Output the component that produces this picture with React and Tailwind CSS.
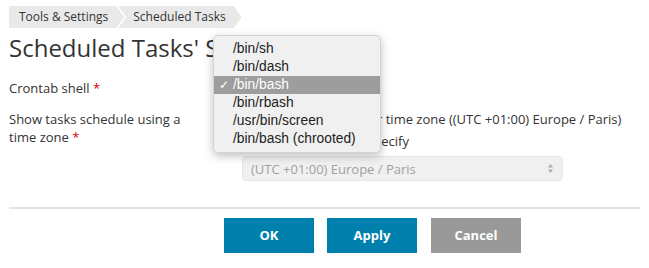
import React from "react";

const shells = [
  "/bin/sh",
  "/bin/dash",
  "/bin/bash",
  "/bin/rbash",
  "/usr/bin/screen",
  "/bin/bash (chrooted)",
];

const Crumb = ({ children, first }) => (
  <div
    className={`h-[22px] flex items-center bg-[#e9e9e9] text-[12px] text-[#333] ${
      first ? "pl-[10px] pr-[16px]" : "pl-[15px] pr-[16px] -ml-[6px]"
    }`}
    style={{
      clipPath: first
        ? "polygon(0 0, calc(100% - 8px) 0, 100% 50%, calc(100% - 8px) 100%, 0 100%)"
        : "polygon(0 0, calc(100% - 8px) 0, 100% 50%, calc(100% - 8px) 100%, 0 100%, 8px 50%)",
    }}
  >
    {children}
  </div>
);

const Radio = ({ checked }) => (
  <span className="w-[13px] h-[13px] rounded-full border border-[#aaa] bg-white flex items-center justify-center shrink-0">
    {checked && <span className="w-[5px] h-[5px] rounded-full bg-[#333]" />}
  </span>
);

export default function App() {
  return (
    <div className="relative w-[649px] h-[268px] bg-white font-['Open_Sans',sans-serif] text-[#333] overflow-hidden">
      <div className="px-[9px] pt-[6px]">
        <nav className="flex">
          <Crumb first>Tools &amp; Settings</Crumb>
          <Crumb>Scheduled Tasks</Crumb>
        </nav>
        <h1 className="mt-[3px] text-[24px] leading-[34px] text-[#333]">Scheduled Tasks' Settings</h1>

        <div className="mt-[9px] grid grid-cols-[233px_1fr] text-[13px] leading-[18px]">
          <div className="py-[5px]">
            Crontab shell <span className="text-[#d00]">*</span>
          </div>
          <div className="py-[2px]">
            <div className="w-[120px] h-[24px] border border-[#ccc] rounded-[3px] px-[8px] flex items-center">/bin/bash</div>
          </div>

          <div className="mt-[8px] w-[190px]">
            Show tasks schedule using a time zone <span className="text-[#d00]">*</span>
          </div>
          <div className="mt-[8px] flex flex-col">
            <label className="flex items-center gap-[5px]">
              <Radio checked />
              <span>Use the Plesk server time zone ((UTC +01:00) Europe / Paris)</span>
            </label>
            <label className="mt-[4px] flex items-center gap-[5px]">
              <Radio />
              <span>Use a time zone I specify</span>
            </label>
            <div className="mt-[6px] w-[321px] h-[25px] rounded-[4px] bg-[#f0f0f0] border border-[#e6e6e6] flex items-center justify-between pl-[8px] pr-[8px] text-[#a0a0a0]">
              <span>(UTC +01:00) Europe / Paris</span>
              <svg width="7" height="11" viewBox="0 0 7 11" className="text-[#aaa]">
                <path d="M3.5 1 L6 4.5 H1 Z M3.5 10 L6 6.5 H1 Z" fill="currentColor" />
              </svg>
            </div>
          </div>
        </div>

        <div className="mt-[26px] h-[2px] bg-[#e3e3e3]" />

        <div className="mt-[9px] pl-[215px] flex gap-[13px]">
          <button className="w-[90px] h-[35px] bg-[#0080ad] text-white text-[13px] font-bold">OK</button>
          <button className="w-[90px] h-[35px] bg-[#0080ad] text-white text-[13px] font-bold">Apply</button>
          <button className="ml-[1px] w-[90px] h-[35px] bg-[#999] text-white text-[13px] font-bold">Cancel</button>
        </div>
      </div>

      <div className="absolute left-[213px] top-[35px] w-[168px] py-[4px] rounded-[5px] bg-[#f0f0f0] border border-[#d4d4d4] shadow-[0_3px_10px_rgba(0,0,0,0.25)] font-['Liberation_Sans',sans-serif] text-[13.8px] text-[#222]">
        {shells.map((s) => (
          <div
            key={s}
            className={`h-[18px] flex items-center pl-[19px] relative ${
              s === "/bin/bash" ? "bg-[#9d9d9d] text-white" : ""
            }`}
          >
            {s === "/bin/bash" && <span className="absolute left-[5px] text-[12px]">✓</span>}
            {s}
          </div>
        ))}
      </div>
    </div>
  );
}
